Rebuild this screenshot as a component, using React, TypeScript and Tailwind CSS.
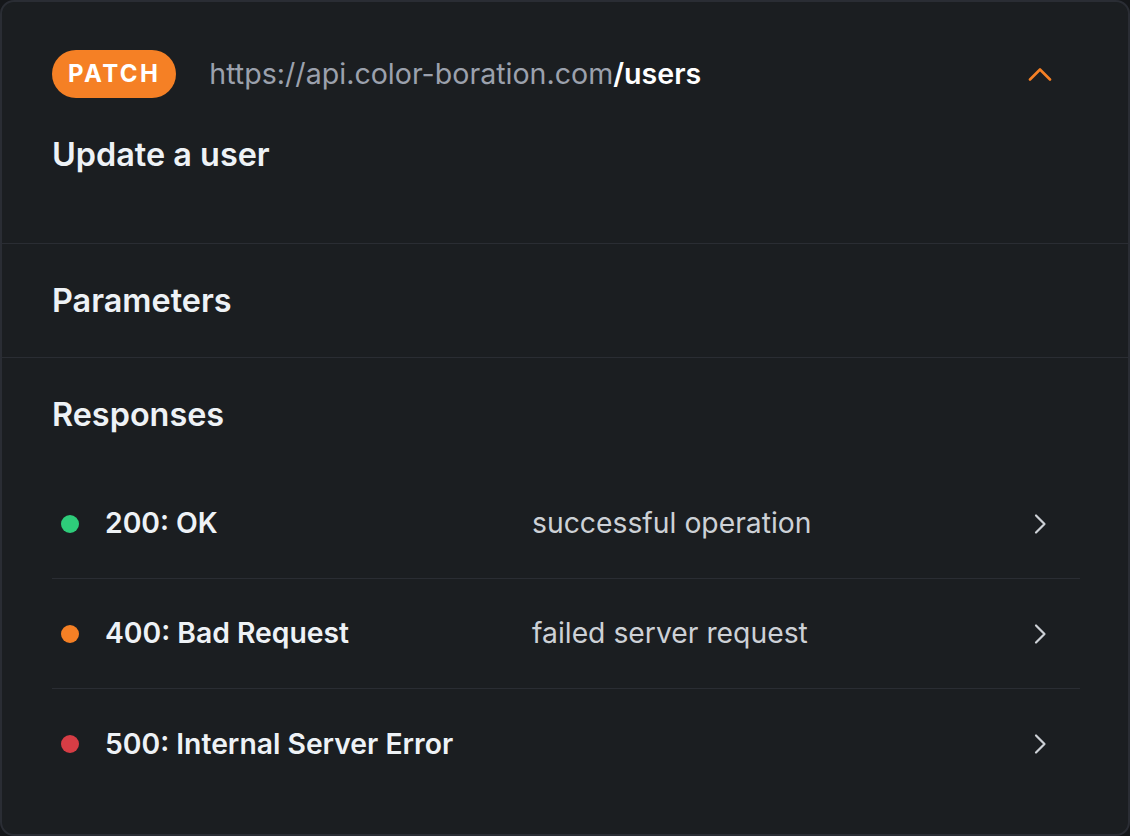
const responses = [
  { code: '200: OK', desc: 'successful operation', dot: 'bg-[#2ecc7a]' },
  { code: '400: Bad Request', desc: 'failed server request', dot: 'bg-[#f58025]' },
  { code: '500: Internal Server Error', desc: '', dot: 'bg-[#d63d45]' },
]

const App = () => {
  return (
    <div className="w-[1130px] h-[836px] bg-[#15171a]" style={{ fontFamily: 'Inter, "Noto Sans", sans-serif' }}>
      <div className="h-full rounded-[14px] border-2 border-[#2a2d34] bg-[#1b1e21] overflow-hidden">
        {/* endpoint header */}
        <div className="px-[50px] pt-[48px] pb-[68px] border-b border-[#2a2d33]">
          <div className="flex items-center h-12">
            <span className="h-12 px-4 rounded-full bg-[#f58025] text-white text-[24px] font-bold tracking-[0.1em] flex items-center">
              PATCH
            </span>
            <span className="ml-[33px] text-[28.6px] text-[#9ba1ad]">
              https://api.color-boration.com<span className="text-white font-semibold">/users</span>
            </span>
            <svg className="ml-auto mr-[26px]" width="24" height="14" viewBox="0 0 24 14" fill="none">
              <polyline points="2,12.5 12,2.5 22,12.5" stroke="#f58025" strokeWidth="2.6" strokeLinecap="round" strokeLinejoin="round" />
            </svg>
          </div>
          <h1 className="mt-[37px] text-[32.4px] leading-10 font-semibold text-[#eef2f6]">Update a user</h1>
        </div>

        <div className="px-[50px] pt-[37px] pb-[36px] border-b border-[#2a2d33]">
          <h2 className="text-[32.4px] leading-10 font-semibold text-[#eef2f6]">Parameters</h2>
        </div>

        <div className="px-[50px] pt-[37px]">
          <h2 className="text-[32.4px] leading-10 font-semibold text-[#eef2f6]">Responses</h2>
          <div className="mt-[34px] w-[1028px]">
            {responses.map((r, i) => (
              <div
                key={r.code}
                className={`h-[110px] flex items-center ${i < responses.length - 1 ? 'border-b border-[#2a2d33]' : ''}`}
              >
                <span className={`ml-[9px] w-[18px] h-[18px] rounded-full ${r.dot}`} />
                <span className="ml-[26px] w-[427px] text-[28.3px] font-semibold text-[#eef2f6]">{r.code}</span>
                <span className="text-[28.3px] text-[#cdd1d6]">{r.desc}</span>
                <svg className="ml-auto mr-[33px]" width="14" height="22" viewBox="0 0 14 22" fill="none">
                  <polyline points="3,2.5 11.5,11 3,19.5" stroke="#cdd1d6" strokeWidth="2.2" strokeLinecap="round" strokeLinejoin="round" />
                </svg>
              </div>
            ))}
          </div>
        </div>
      </div>
    </div>
  )
}

export default App
